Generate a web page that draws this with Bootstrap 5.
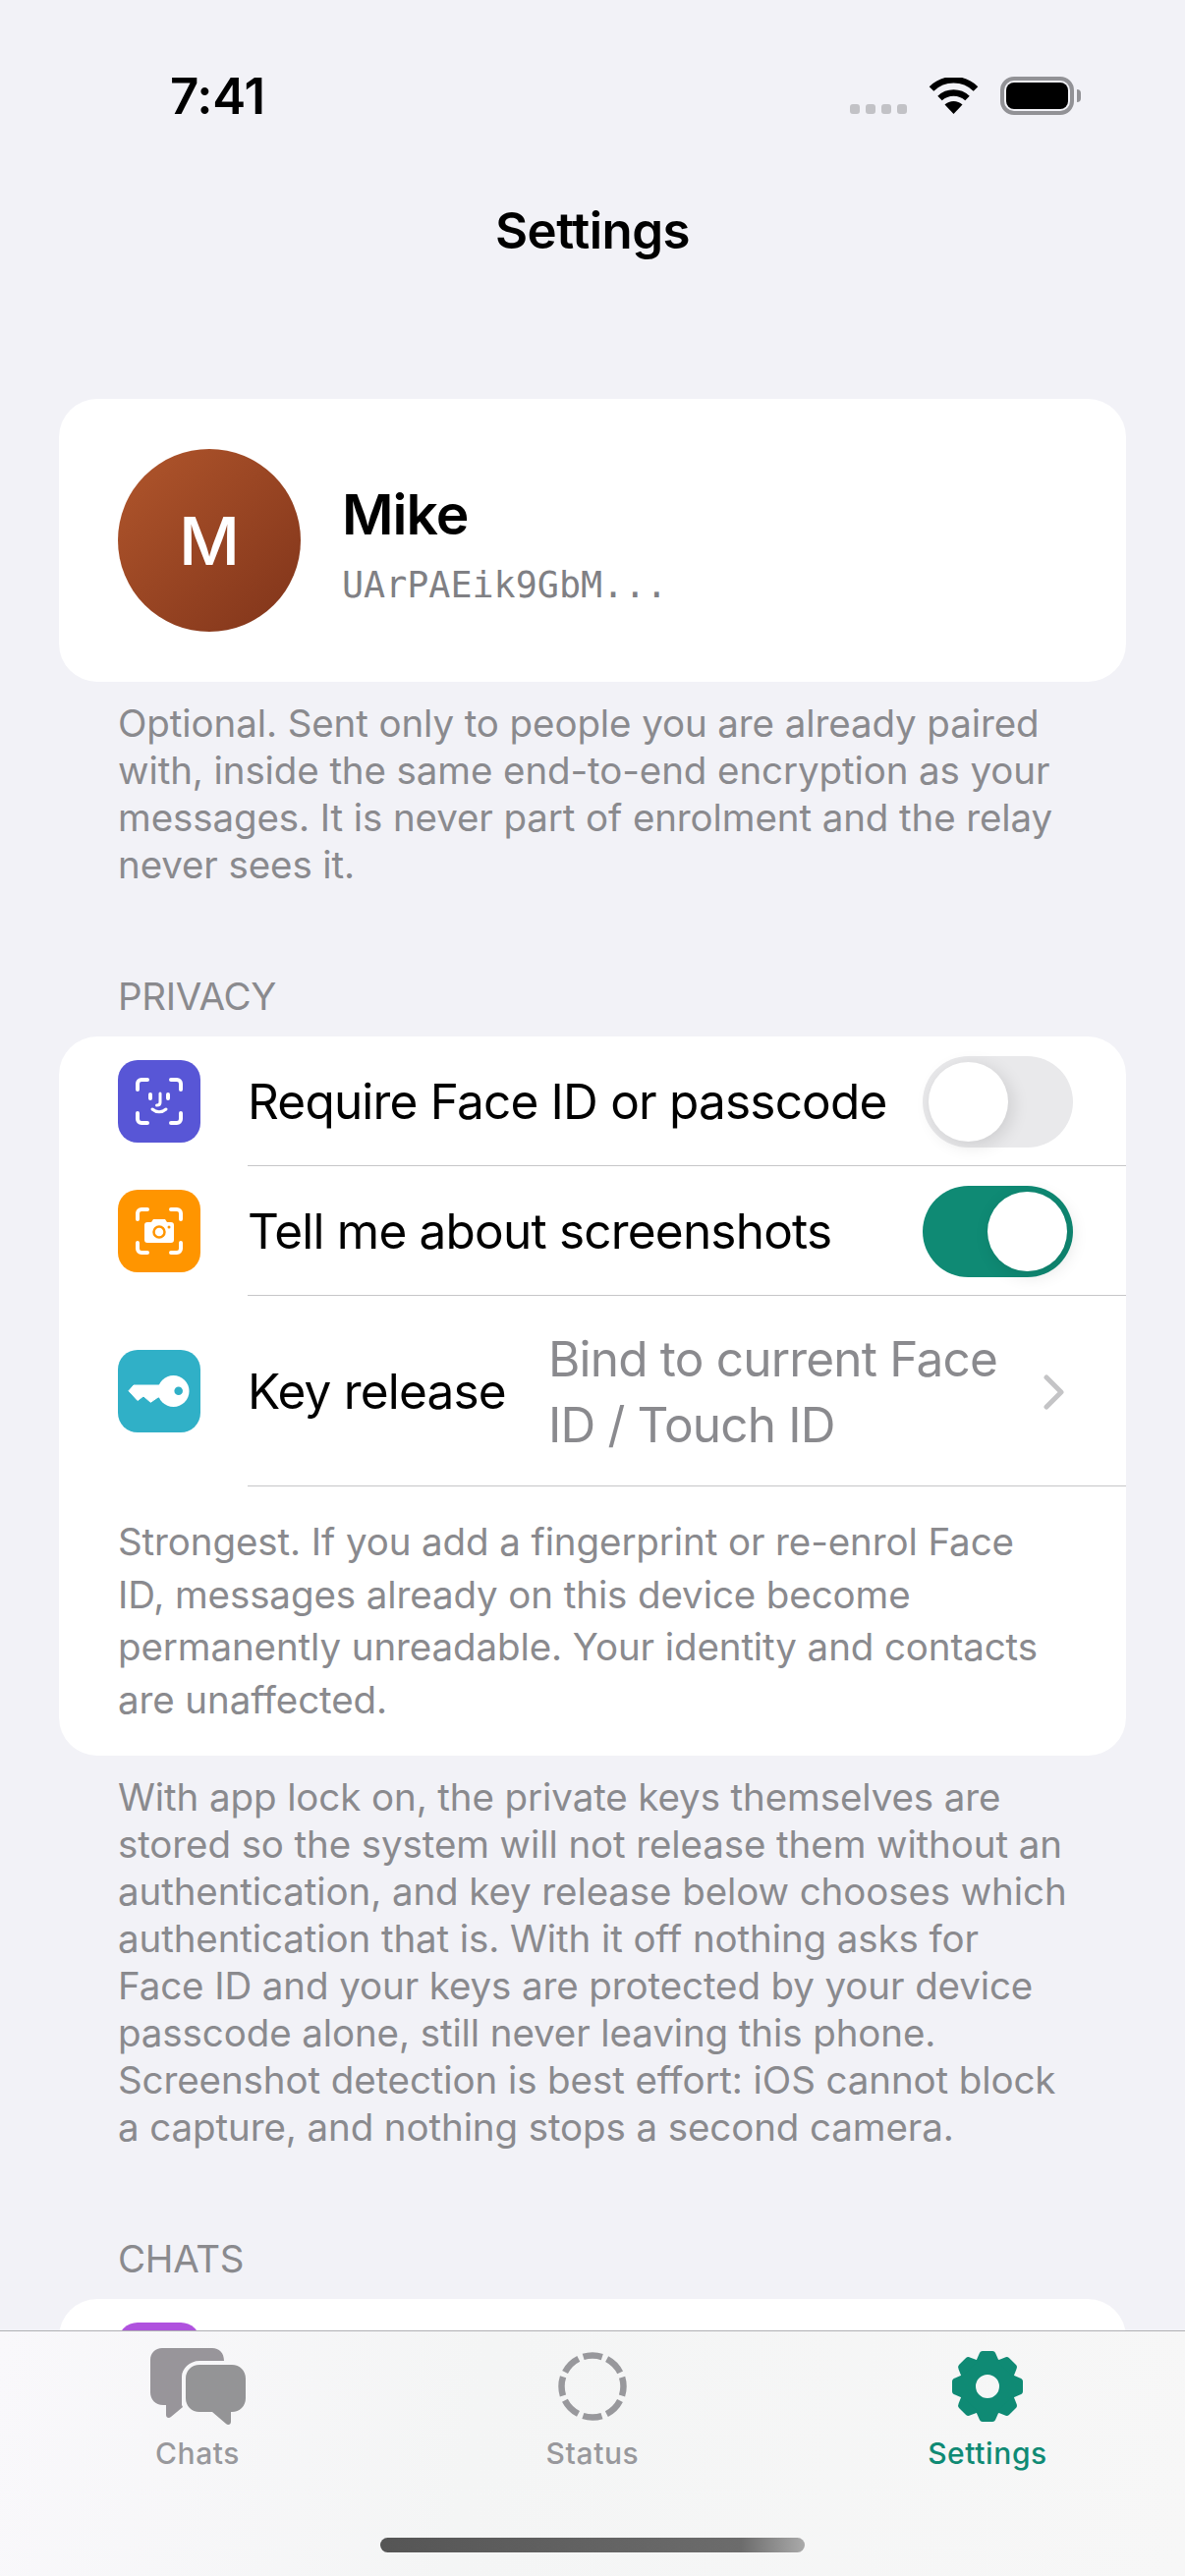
<!DOCTYPE html>
<html lang="en">
  <head>
    <meta charset="UTF-8" />
    <meta name="viewport" content="width=device-width, initial-scale=1.0" />
    <title>Settings</title>
    <link
      href="https://cdn.jsdelivr.net/npm/bootstrap@5.3.0/dist/css/bootstrap.min.css"
      rel="stylesheet"
    />
    <style>
      :root {
        --page-bg: #f2f2f7;
        --muted: #8a8a8e;
        --teal: #0f8a74;
        --hairline: #c6c6c8;
      }

      html,
      body {
        height: 2622px;
      }

      body {
        background: var(--page-bg);
        font-family: Inter, "Noto Sans", sans-serif;
        color: #000;
        overflow: hidden;
      }

      .phone {
        position: relative;
        height: 2622px;
        overflow: hidden;
      }

      .statusbar {
        height: 190px;
        padding: 72px 113px 0 173px;
      }

      .clock {
        font-size: 51px;
        font-weight: 600;
        line-height: 52px;
        letter-spacing: -0.3px;
      }

      .sig-dots {
        gap: 6px;
        margin-top: 34px;
        margin-right: 22px;
      }

      .sig-dots span {
        width: 10px;
        height: 10px;
        border-radius: 3px;
        background: #c2c2c6;
      }

      .wifi {
        margin-top: 7px;
      }

      .batt {
        width: 75px;
        height: 39px;
        margin-left: 22px;
        margin-top: 6px;
        padding: 2px;
        border: 4px solid #929296;
        border-radius: 14px;
        position: relative;
      }

      .batt::before {
        content: "";
        display: block;
        height: 100%;
        background: #000;
        border-radius: 8px;
      }

      .batt::after {
        content: "";
        position: absolute;
        right: -11px;
        top: 9px;
        width: 4px;
        height: 13px;
        background: #929296;
        border-radius: 0 4px 4px 0;
      }

      .nav-title {
        height: 216px;
        padding-top: 14px;
        font-size: 51px;
        font-weight: 600;
        line-height: 62px;
        letter-spacing: -0.5px;
      }

      .panel {
        margin: 0 60px;
        background: #fff;
        border-radius: 39px;
      }

      .profile {
        height: 288px;
        padding: 0 60px;
        gap: 42px;
      }

      .avatar {
        width: 186px;
        height: 186px;
        flex: none;
        border-radius: 50%;
        background: linear-gradient(135deg, #b1562c, #80341a);
        color: #fff;
        font-size: 68px;
        font-weight: 500;
      }

      .who {
        padding-top: 10px;
      }

      .who-name {
        font-size: 57px;
        font-weight: 600;
        line-height: 66px;
        letter-spacing: -1px;
      }

      .who-key {
        font-family: "DejaVu Sans Mono", monospace;
        font-size: 36.7px;
        line-height: 46px;
        color: #808084;
        margin-top: 16px;
      }

      .caption {
        margin: 0;
        padding: 18px 116px 0 120px;
        font-size: 38.5px;
        letter-spacing: -0.1px;
        line-height: 48px;
        color: var(--muted);
      }

      .sect-head {
        margin: 86px 0 17px;
        padding: 0 120px;
        font-size: 38.5px;
        font-weight: 400;
        letter-spacing: -0.3px;
        line-height: 48px;
        color: var(--muted);
      }

      .pref-row {
        min-height: 132px;
        padding-left: 60px;
      }

      .pref-icon {
        width: 84px;
        height: 84px;
        flex: none;
        border-radius: 20px;
      }

      .pref-body {
        min-height: 132px;
        margin-left: 48px;
        padding: 2px 54px 0 0;
        border-bottom: 1px solid var(--hairline);
        font-size: 49.5px;
        letter-spacing: -0.8px;
      }

      .pref-tall {
        min-height: 194px;
      }

      .pref-label {
        white-space: nowrap;
      }

      .pref-value {
        margin-left: 43px;
        line-height: 67px;
        color: var(--muted);
      }

      .chevron {
        flex: none;
        margin: 0 8px 0 24px;
      }

      .toggle {
        width: 153px;
        height: 93px;
        flex: none;
        padding: 6px;
        border-radius: 47px;
        background: #e9e9eb;
        margin-left: auto;
      }

      .toggle span {
        display: block;
        width: 81px;
        height: 81px;
        border-radius: 50%;
        background: #fff;
        box-shadow: 4px 4px 18px rgba(0, 0, 0, 0.12);
      }

      .toggle-on {
        background: var(--teal);
        justify-content: flex-end;
      }

      .pref-note {
        margin: 0;
        padding: 30px 60px 30px;
        font-size: 38.5px;
        letter-spacing: -0.1px;
        line-height: 53.5px;
        color: var(--muted);
      }

      .chats-panel {
        height: 300px;
        padding: 24px 60px;
      }

      .chats-icon {
        background: #af52de;
      }

      .tabbar {
        position: absolute;
        left: 0;
        right: 0;
        bottom: 0;
        height: 250px;
        border-top: 1px solid #b0b0b4;
        background: linear-gradient(100deg, #f9f8fb, #f4f5f5 40%, #f7f7f7 100%);
      }

      .tab {
        width: 402px;
        padding-top: 14px;
        font-size: 30px;
        font-weight: 500;
        letter-spacing: 0.6px;
        line-height: 36px;
        color: #98989c;
      }

      .tab svg {
        display: block;
        height: 84px;
        margin: 0 auto 8px;
      }

      .tab-on {
        color: var(--teal);
      }

      .home-bar {
        position: absolute;
        left: 387px;
        bottom: 24px;
        width: 432px;
        height: 15px;
        border-radius: 8px;
        background: linear-gradient(90deg, #555, #6c6c6c 85%, #aaa);
      }
    </style>
  </head>
  <body>
    <div class="phone">
      <!-- Status bar -->
      <div class="statusbar d-flex align-items-start">
        <div class="clock">7:41</div>
        <div class="d-flex align-items-start ms-auto">
          <div class="sig-dots d-flex">
            <span></span><span></span><span></span><span></span>
          </div>
          <svg class="wifi" width="51" height="37" viewBox="0 0 51 37">
            <path d="M25.500 37 16.500 27.500a13 13 0 0 1 18 0Z" fill="#000" />
            <path d="M11.500 21a20.500 20.500 0 0 1 28 0" fill="none" stroke="#000" stroke-width="6.500" />
            <path d="M3 11.500a32 32 0 0 1 45 0" fill="none" stroke="#000" stroke-width="6.500" />
          </svg>
          <div class="batt"></div>
        </div>
      </div>
      <div class="nav-title text-center">Settings</div>

      <!-- Profile -->
      <div class="panel profile d-flex align-items-center">
        <div class="avatar d-flex align-items-center justify-content-center">M</div>
        <div class="who">
          <div class="who-name">Mike</div>
          <div class="who-key">UArPAEik9GbM...</div>
        </div>
      </div>
      <p class="caption">
        Optional. Sent only to people you are already paired with, inside the same end-to-end encryption as your messages. It is never part of enrolment and the relay never sees it.
      </p>

      <!-- Privacy -->
      <h2 class="sect-head">PRIVACY</h2>
      <div class="panel">
        <div class="pref-row d-flex align-items-center">
          <svg class="pref-icon" viewBox="0 0 84 84">
            <rect width="84" height="84" fill="#5856d6" />
            <g fill="none" stroke="#fff" stroke-width="4" stroke-linecap="round" stroke-linejoin="round">
              <path d="M20 30v-6a4 4 0 0 1 4-4h6M54 20h6a4 4 0 0 1 4 4v6M64 54v6a4 4 0 0 1-4 4h-6M30 64h-6a4 4 0 0 1-4-4v-6" />
              <path d="M33 35v4M51 35v4" />
              <path d="M43 34v9c0 2-1 3-3.500 3" stroke-width="3" />
              <path d="M35 50c4 3.500 10 3.500 14 0" stroke-width="3" />
            </g>
          </svg>
          <div class="pref-body flex-grow-1 d-flex align-items-center">
            <span>Require Face ID or passcode</span>
            <div class="toggle d-flex"><span></span></div>
          </div>
        </div>
        <div class="pref-row d-flex align-items-center">
          <svg class="pref-icon" viewBox="0 0 84 84">
            <rect width="84" height="84" fill="#ff9500" />
            <path d="M20 30v-6a4 4 0 0 1 4-4h6M54 20h6a4 4 0 0 1 4 4v6M64 54v6a4 4 0 0 1-4 4h-6M30 64h-6a4 4 0 0 1-4-4v-6" fill="none" stroke="#fff" stroke-width="4" stroke-linecap="round" stroke-linejoin="round" />
            <path d="M30 33h4l2-3h12l2 3h4a3 3 0 0 1 3 3v15a3 3 0 0 1-3 3H30a3 3 0 0 1-3-3V36a3 3 0 0 1 3-3Z" fill="#fff" />
            <circle cx="42" cy="43" r="5.500" fill="none" stroke="#ff9500" stroke-width="2.500" />
            <circle cx="52" cy="38" r="1.500" fill="#ff9500" />
          </svg>
          <div class="pref-body flex-grow-1 d-flex align-items-center">
            <span>Tell me about screenshots</span>
            <div class="toggle toggle-on d-flex"><span></span></div>
          </div>
        </div>
        <div class="pref-row d-flex align-items-center">
          <svg class="pref-icon" viewBox="0 0 84 84">
            <rect width="84" height="84" fill="#30b0c7" />
            <path d="M11 41.700 16 36H50V48H41L33.300 53.300 26 47 20 51.500Z" fill="#fff" stroke="#fff" stroke-linejoin="round" />
            <circle cx="56.500" cy="42" r="16" fill="#fff" />
            <circle cx="61.700" cy="41.700" r="4.300" fill="#30b0c7" />
          </svg>
          <div class="pref-body pref-tall flex-grow-1 d-flex align-items-center">
            <span class="pref-label">Key release</span>
            <span class="pref-value">Bind to current Face ID / Touch ID</span>
            <svg class="chevron ms-auto" width="22" height="36" viewBox="0 0 22 36">
              <path d="M3 3l15 15L3 33" fill="none" stroke="#c4c4c6" stroke-width="5" stroke-linecap="round" stroke-linejoin="round" />
            </svg>
          </div>
        </div>
        <p class="pref-note">
          Strongest. If you add a fingerprint or re-enrol Face ID, messages already on this device become permanently unreadable. Your identity and contacts are unaffected.
        </p>
      </div>
      <p class="caption">
        With app lock on, the private keys themselves are stored so the system will not release them without an authentication, and key release below chooses which authentication that is. With it off nothing asks for Face ID and your keys are protected by your device passcode alone, still never leaving this phone. Screenshot detection is best effort: iOS cannot block a capture, and nothing stops a second camera.
      </p>

      <!-- Chats -->
      <h2 class="sect-head">CHATS</h2>
      <div class="panel chats-panel">
        <div class="pref-icon chats-icon"></div>
      </div>

      <!-- Tab bar -->
      <div class="tabbar d-flex">
        <div class="tab text-center">
          <svg viewBox="0 -3 97 84" width="97">
            <path d="M12 0H63C70 0 75 5 75 13H50C40 13 32 21 32 29V58L33 60 21 70C19 72 16 71 16 68V58H13C5 58 0 52 0 45V12C0 5 5 0 12 0Z" fill="#98959a" />
            <path d="M50 17H83C91 17 97 23 97 31V51C97 59 91 65 83 65H82V75C82 78 79 79 77 77L63 65H50C42 65 36 59 36 51V31C36 23 42 17 50 17Z" fill="#949496" />
          </svg>
          <div>Chats</div>
        </div>
        <div class="tab text-center">
          <svg viewBox="0 0 84 84" width="84">
            <circle cx="42" cy="42" r="31.500" fill="none" stroke="#98989c" stroke-width="6.500" stroke-dasharray="19.500 5.240" stroke-dashoffset="9.750" />
          </svg>
          <div>Status</div>
        </div>
        <div class="tab tab-on text-center">
          <svg viewBox="-42 -42 84 84" width="84">
            <circle r="20" fill="none" stroke="#0f8a74" stroke-width="16" />
            <g fill="#0f8a74">
              <path d="M-12-25-8.500-33Q-7.500-36-5-36H5Q7.500-36 8.500-33L12-25Z" />
              <path d="M-12-25-8.500-33Q-7.500-36-5-36H5Q7.500-36 8.500-33L12-25Z" transform="rotate(45)" />
              <path d="M-12-25-8.500-33Q-7.500-36-5-36H5Q7.500-36 8.500-33L12-25Z" transform="rotate(90)" />
              <path d="M-12-25-8.500-33Q-7.500-36-5-36H5Q7.500-36 8.500-33L12-25Z" transform="rotate(135)" />
              <path d="M-12-25-8.500-33Q-7.500-36-5-36H5Q7.500-36 8.500-33L12-25Z" transform="rotate(180)" />
              <path d="M-12-25-8.500-33Q-7.500-36-5-36H5Q7.500-36 8.500-33L12-25Z" transform="rotate(225)" />
              <path d="M-12-25-8.500-33Q-7.500-36-5-36H5Q7.500-36 8.500-33L12-25Z" transform="rotate(270)" />
              <path d="M-12-25-8.500-33Q-7.500-36-5-36H5Q7.500-36 8.500-33L12-25Z" transform="rotate(315)" />
            </g>
          </svg>
          <div>Settings</div>
        </div>
      </div>
      <div class="home-bar"></div>
    </div>
    <script src="https://cdn.jsdelivr.net/npm/bootstrap@5.3.0/dist/js/bootstrap.bundle.min.js"></script>
  </body>
</html>
